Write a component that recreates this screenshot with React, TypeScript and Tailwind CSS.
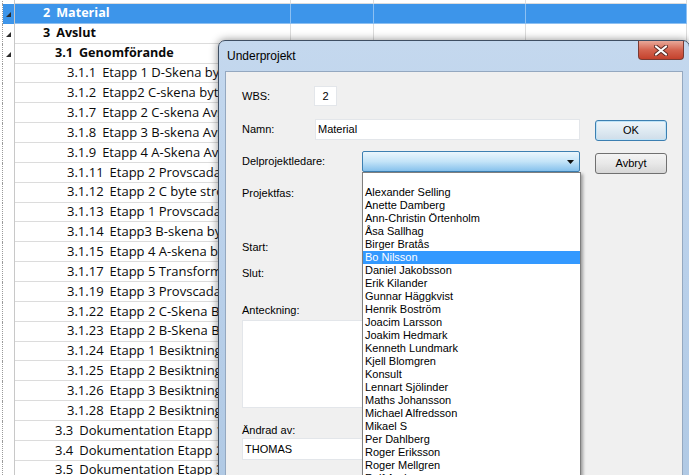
import React from "react"

type Row = { lvl: 1 | 2 | 3; num: string; name: string; bold?: boolean; open?: boolean; sel?: boolean }

const rows: Row[] = [
  { lvl: 1, num: "1", name: "Administration Planering", bold: true, open: true },
  { lvl: 1, num: "2", name: "Material", bold: true, open: true, sel: true },
  { lvl: 1, num: "3", name: "Avslut", bold: true, open: true },
  { lvl: 2, num: "3.1", name: "Genomförande", bold: true, open: true },
  { lvl: 3, num: "3.1.1", name: "Etapp 1 D-Skena byte" },
  { lvl: 3, num: "3.1.2", name: "Etapp2 C-skena byte" },
  { lvl: 3, num: "3.1.7", name: "Etapp 2 C-skena Avstängning" },
  { lvl: 3, num: "3.1.8", name: "Etapp 3 B-skena Avstängning" },
  { lvl: 3, num: "3.1.9", name: "Etapp 4 A-Skena Avstängning" },
  { lvl: 3, num: "3.1.11", name: "Etapp 2 Provscada" },
  { lvl: 3, num: "3.1.12", name: "Etapp 2 C byte ström" },
  { lvl: 3, num: "3.1.13", name: "Etapp 1 Provscada" },
  { lvl: 3, num: "3.1.14", name: "Etapp3 B-skena byte" },
  { lvl: 3, num: "3.1.15", name: "Etapp 4 A-skena byte" },
  { lvl: 3, num: "3.1.17", name: "Etapp 5 Transformator" },
  { lvl: 3, num: "3.1.19", name: "Etapp 3 Provscada" },
  { lvl: 3, num: "3.1.22", name: "Etapp 2 C-Skena Besiktning" },
  { lvl: 3, num: "3.1.23", name: "Etapp 2 B-Skena Besiktning" },
  { lvl: 3, num: "3.1.24", name: "Etapp 1 Besiktning" },
  { lvl: 3, num: "3.1.25", name: "Etapp 2 Besiktning" },
  { lvl: 3, num: "3.1.26", name: "Etapp 3 Besiktning" },
  { lvl: 3, num: "3.1.28", name: "Etapp 2 Besiktning" },
  { lvl: 2, num: "3.3", name: "Dokumentation Etapp 1" },
  { lvl: 2, num: "3.4", name: "Dokumentation Etapp 2" },
  { lvl: 2, num: "3.5", name: "Dokumentation Etapp 3" },
]

const people = [
  "",
  "Alexander Selling",
  "Anette Damberg",
  "Ann-Christin Örtenholm",
  "Åsa Sallhag",
  "Birger Bratås",
  "Bo Nilsson",
  "Daniel Jakobsson",
  "Erik Kilander",
  "Gunnar Häggkvist",
  "Henrik Boström",
  "Joacim Larsson",
  "Joakim Hedmark",
  "Kenneth Lundmark",
  "Kjell Blomgren",
  "Konsult",
  "Lennart Sjölinder",
  "Maths Johansson",
  "Michael Alfredsson",
  "Mikael S",
  "Per Dahlberg",
  "Roger Eriksson",
  "Roger Mellgren",
  "Rolf Andersson",
]

function SheetRow({ r }: { r: Row }) {
  const line = r.sel ? "border-[#8dc0f2]" : "border-[#dcdcdc]"
  const bg = r.sel ? "bg-[#3d95ea] text-white" : "text-[#0a0a0a]"
  const indent = r.lvl === 1 ? "pl-[28px]" : r.lvl === 2 ? "pl-[40px]" : "pl-[52px]"
  return (
    <div className="flex h-[19.87px]">
      <div className="w-[3px] border-r border-dotted border-[#9a9a9a]" />
      <div className={`w-[12px] border-r border-[#c8c8c8] flex items-center justify-center ${r.sel ? "bg-[#3d95ea]" : ""}`}>
        {r.open && (
          <svg width="5" height="5" viewBox="0 0 5 5" className="mt-[2px]">
            <path d="M5 0 L5 5 L0 5 Z" fill="#2b2b2b" />
          </svg>
        )}
      </div>
      <div
        className={`w-[276px] border-r border-b ${line} ${bg} ${indent} flex items-center overflow-hidden whitespace-nowrap ${
          r.bold ? "font-bold text-[12.6px]" : "text-[13px]"
        }`}
      >
        <span className="mr-[6px]">{r.num}</span>
        <span>{r.name}</span>
      </div>
      <div className={`w-[83px] border-r border-b ${line} ${bg}`} />
      <div className={`w-[152px] border-r border-b ${line} ${bg}`} />
      <div className={`w-[161px] border-r border-b ${line} ${bg}`} />
      <div className="flex-1" />
    </div>
  )
}

function Label({ children, className = "" }: { children: React.ReactNode; className?: string }) {
  return <div className={`h-[14px] leading-[14px] ${className}`}>{children}</div>
}

function Dialog() {
  return (
    <div className="absolute left-[218px] top-[40px] w-[472px] h-[460px] rounded-t-[7px] border border-[#3f4f63] bg-gradient-to-b from-[#c4d8ee] via-[#b9d0ea] to-[#b0c9e4] shadow-[0_0_8px_rgba(0,0,0,0.45)] font-['Liberation_Sans',Arial,sans-serif] text-[11px] text-black">
      {/* title bar */}
      <div className="relative h-[30px] flex items-center pl-[8px]">
        <span className="text-[12px] text-black">Underprojekt</span>
        <div className="absolute right-[5px] top-0 w-[46px] h-[19px] rounded-b-[4px] border border-t-0 border-[#7a3a32] bg-gradient-to-b from-[#e8a899] via-[#d4634f] to-[#c4412c] flex items-center justify-center">
          <svg width="14" height="11" viewBox="0 0 14 11">
            <path d="M2 1.5 L12 9.5 M12 1.5 L2 9.5" stroke="#5a2a24" strokeWidth="4" strokeLinecap="round" />
            <path d="M2 1.5 L12 9.5 M12 1.5 L2 9.5" stroke="#ffffff" strokeWidth="2.2" strokeLinecap="round" />
          </svg>
        </div>
      </div>
      {/* client area */}
      <div className="relative ml-[6px] w-[458px] h-[420px] border border-[#94a8c0] bg-[#f0f0f0] flex pl-[16px]">
        <div className="w-[338px] flex flex-col">
          <div className="mt-[14px] h-[20px] flex items-center">
            <div className="w-[72px]">WBS:</div>
            <div className="w-[23px] h-[20px] bg-white border border-[#e3e6ea] flex items-center justify-center">2</div>
          </div>
          <div className="mt-[13px] h-[21px] flex items-center">
            <div className="w-[73px]">Namn:</div>
            <div className="flex-1 h-[21px] bg-white border border-[#e3e6ea] flex items-center pl-[2px]">Material</div>
          </div>
          <div className="mt-[11px] h-[21px] flex items-center">
            <div className="w-[120px]">Delprojektledare:</div>
            <div className="flex-1 h-[21px] rounded-[2px] border border-[#3c7fb1] bg-gradient-to-b from-[#eaf6fd] via-[#c4e4f8] to-[#86c1ec] flex items-center justify-end pr-[5px]">
              <svg width="7" height="4" viewBox="0 0 7 4">
                <path d="M0 0 L7 0 L3.5 4 Z" fill="#111" />
              </svg>
            </div>
          </div>
          <Label className="mt-[14px]">Projektfas:</Label>
          <Label className="mt-[40px]">Start:</Label>
          <Label className="mt-[12px]">Slut:</Label>
          <Label className="mt-[23px]">Anteckning:</Label>
          <div className="mt-[3px] h-[88px] bg-white border border-[#e3e6ea]" />
          <Label className="mt-[15px]">Ändrad av:</Label>
          <div className="mt-[1px] h-[22px] bg-white border border-[#e3e6ea] flex items-center pl-[2px]">THOMAS</div>
        </div>
        <div className="ml-[15px] w-[72px] flex flex-col">
          <div className="mt-[48px] h-[21px] rounded-[3px] border border-[#3c7fb1] bg-gradient-to-b from-[#eef5fa] via-[#dfeaf2] to-[#cfdde9] shadow-[inset_0_0_0_1px_#bfe3f7] flex items-center justify-center">OK</div>
          <div className="mt-[12px] h-[21px] rounded-[3px] border border-[#707070] bg-gradient-to-b from-[#f4f4f4] via-[#e8e8e8] to-[#d6d6d6] flex items-center justify-center">Avbryt</div>
        </div>
        {/* open dropdown list */}
        <div className="absolute left-[136px] top-[100px] w-[219px] h-[330px] bg-white border border-[#7f7f7f] shadow-[2px_2px_3px_rgba(0,0,0,0.35)] flex flex-col">
          {people.map((p, i) => (
            <div
              key={i}
              className={`h-[13px] leading-[13px] pl-[2px] whitespace-nowrap ${p === "Bo Nilsson" ? "bg-[#3399ff] text-white" : "text-black"}`}
            >
              {p}
            </div>
          ))}
        </div>
      </div>
    </div>
  )
}

export default function App() {
  return (
    <div className="relative w-[689px] h-[475px] overflow-hidden bg-white font-['Open_Sans',sans-serif]">
      <div className="mt-[-15.87px] flex flex-col">
        {rows.map((r, i) => (
          <SheetRow key={i} r={r} />
        ))}
      </div>
      <Dialog />
    </div>
  )
}
